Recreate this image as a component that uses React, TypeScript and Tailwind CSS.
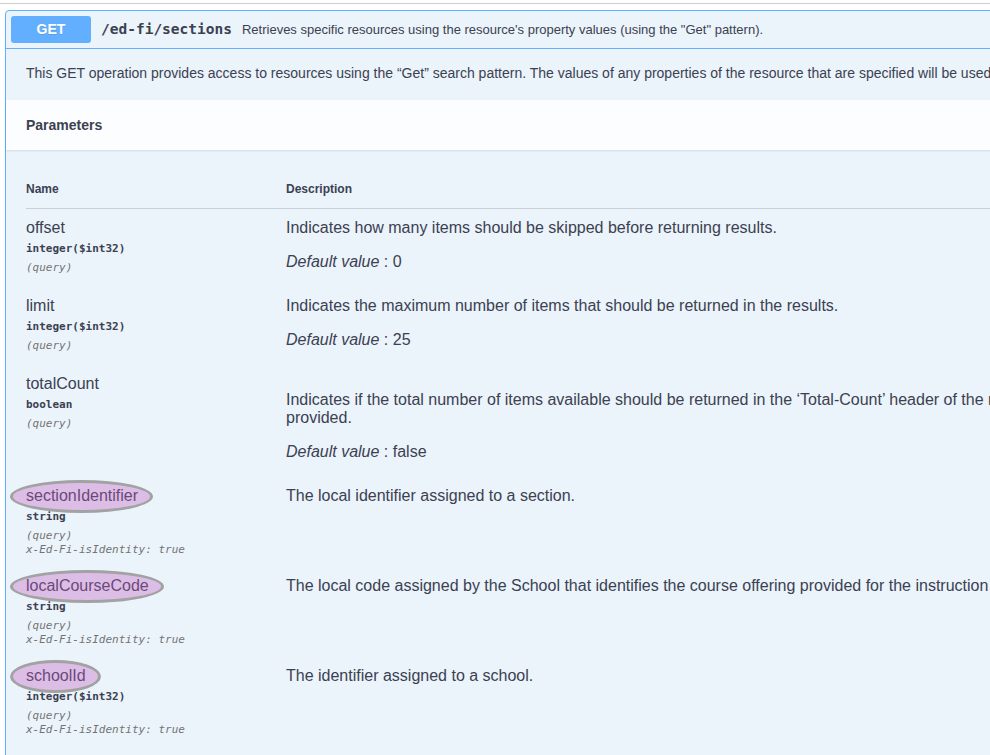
// App.tsx
// Swagger-style operation block: GET /ed-fi/sections with parameter table
// Some names carry a hand-drawn purple highlight oval

type Param = {
  name: string;
  type: string;
  identity?: boolean;
  highlight?: boolean;
  desc: string;
  descTop?: boolean;
  def?: string;
};

const params: Param[] = [
  {
    name: 'offset',
    type: 'integer($int32)',
    desc: 'Indicates how many items should be skipped before returning results.',
    def: '0',
  },
  {
    name: 'limit',
    type: 'integer($int32)',
    desc: 'Indicates the maximum number of items that should be returned in the results.',
    def: '25',
  },
  {
    name: 'totalCount',
    type: 'boolean',
    desc: 'Indicates if the total number of items available should be returned in the \u2018Total-Count\u2019 header of the response.  If set to false, \u2018Total-Count\u2019 header will not be provided.',
    descTop: true,
    def: 'false',
  },
  {
    name: 'sectionIdentifier',
    type: 'string',
    identity: true,
    highlight: true,
    desc: 'The local identifier assigned to a section.',
  },
  {
    name: 'localCourseCode',
    type: 'string',
    identity: true,
    highlight: true,
    desc: 'The local code assigned by the School that identifies the course offering provided for the instruction of students.',
  },
  {
    name: 'schoolId',
    type: 'integer($int32)',
    identity: true,
    highlight: true,
    desc: 'The identifier assigned to a school.',
  },
];

const mono = "font-['DejaVu_Sans_Mono','Liberation_Mono',monospace]";

function ParamRow({ p }: { p: Param }) {
  return (
    <div className="flex items-start pt-[10px]">
      {/* Name column */}
      <div className="w-[260px] shrink-0">
        <div className="text-[16px] leading-[18px]">
          <span className="relative inline-block">
            {p.name}
            {p.highlight && (
              <span className="pointer-events-none absolute -left-[16px] -right-[15px] -top-[7px] -bottom-[8px] rounded-[50%] border-[3px] border-[#a2a2a2] bg-[rgba(192,89,191,0.35)]" />
            )}
          </span>
        </div>
        <div className={`${mono} py-[5px] text-[11px] font-bold leading-[14px]`}>{p.type}</div>
        <div className={`${mono} text-[11px] italic leading-[14px] text-[#737373]`}>(query)</div>
        {p.identity && (
          <div className={`${mono} pb-[10px] text-[11px] italic leading-[14px] text-[#737373]`}>
            x-Ed-Fi-isIdentity: true
          </div>
        )}
      </div>

      {/* Description column */}
      <div className="w-[1150px] shrink-0 text-[16px] leading-[18px]">
        <p className={p.descTop ? 'mt-4 mb-4' : 'mb-4'}>{p.desc}</p>
        {p.def !== undefined && (
          <p className="mb-4">
            <i>Default value</i> : {p.def}
          </p>
        )}
      </div>
    </div>
  );
}

export default function App() {
  return (
    <div className="h-[755px] w-[990px] overflow-hidden bg-white font-['Liberation_Sans',Arial,sans-serif] text-[#3b4151]">
      <div className="h-[3px]" />
      <div className="h-px bg-[#cfcfcf]" />
      <div className="h-[6px]" />

      {/* Operation block */}
      <div className="ml-[5px] w-[1500px] rounded-[4px] border border-[#61affe] bg-[#ebf3fb]">
        {/* Summary */}
        <div className="flex items-center border-b border-[#61affe] p-[5px]">
          <div className="flex h-[27px] w-[80px] items-center justify-center rounded-[3px] bg-[#61affe] text-[14px] font-bold text-white [text-shadow:0_1px_0_rgba(0,0,0,0.1)]">
            GET
          </div>
          <span className={`${mono} px-[10px] text-[14.5px] font-bold`}>/ed-fi/sections</span>
          <span className="text-[13px]">
            Retrieves specific resources using the resource's property values (using the "Get" pattern).
          </span>
        </div>

        {/* Operation description */}
        <div className="h-[51px] whitespace-nowrap pl-[20px] pt-[15px] text-[14px] leading-[18px]">
          This GET operation provides access to resources using the “Get” search pattern. The values of any properties of the resource that are specified will be used to return all matching results (if it exists).
        </div>

        {/* Section header */}
        <div className="flex h-[50px] items-center bg-white/80 px-[20px] shadow-[0_1px_2px_rgba(0,0,0,0.1)]">
          <h4 className="text-[14px] font-bold">Parameters</h4>
        </div>

        {/* Parameter table */}
        <div className="p-[20px]">
          <div className="flex border-b border-[rgba(59,65,81,0.2)] py-[12px] text-[12px] font-bold leading-[14px]">
            <div className="w-[260px] shrink-0">Name</div>
            <div>Description</div>
          </div>
          {params.map((p) => (
            <ParamRow key={p.name} p={p} />
          ))}
        </div>
      </div>
    </div>
  );
}
